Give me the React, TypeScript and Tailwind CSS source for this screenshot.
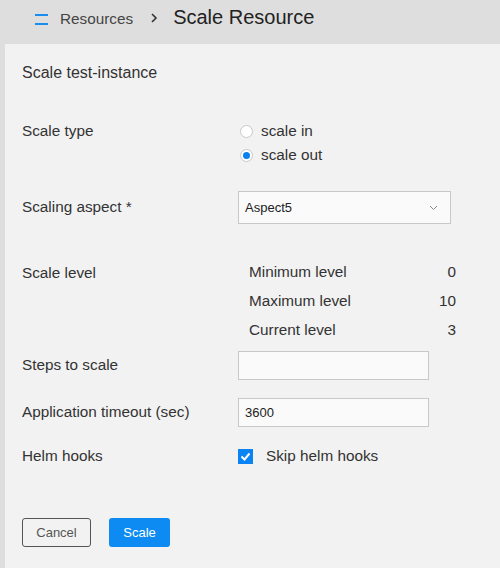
import React from 'react';

const font = { fontFamily: '"Liberation Sans", Arial, sans-serif' };

const Row: React.FC<{ label: string; className?: string; children: React.ReactNode }> = ({ label, className, children }) => (
  <div className={`flex items-center ${className ?? ''}`}>
    <div className="w-[216px] shrink-0 text-[15.3px] text-[#333]">{label}</div>
    <div className="flex-1">{children}</div>
  </div>
);

const App: React.FC = () => {
  const [scaleType, setScaleType] = React.useState<'in' | 'out'>('out');
  const [skipHooks, setSkipHooks] = React.useState(true);

  return (
    <div className="w-[500px] h-[568px] bg-[#dedede] flex flex-col overflow-hidden" style={font}>
      <header className="h-[44px] flex items-center shrink-0">
        <div className="ml-[35px] w-[13px] flex flex-col gap-[7px] mt-[-6px]">
          <span className="block h-[2px] bg-[#1a8cf0]" />
          <span className="block h-[2px] bg-[#1a8cf0]" />
        </div>
        <span className="ml-[12px] text-[15.3px] text-[#444] mt-[-5px]">Resources</span>
        <svg className="ml-[17px] mt-[-8px]" width="8" height="10" viewBox="0 0 8 10">
          <path d="M2 1l4 4-4 4" fill="none" stroke="#333" strokeWidth="1.6" />
        </svg>
        <span className="ml-[15px] text-[20px] text-[#222] mt-[-11px]">Scale Resource</span>
      </header>

      <div className="flex flex-1">
        <div className="w-[5px] shrink-0" />
        <div className="flex-1 bg-[#f2f2f2] pl-[17px] pt-[19px]">
          <div className="text-[16px] leading-[20px] text-[#333]">Scale test-instance</div>

          <div className="flex mt-[36px]">
            <div className="w-[216px] shrink-0 text-[15.3px] leading-[24px] text-[#333]">Scale type</div>
            <div className="flex flex-col">
              {(['in', 'out'] as const).map(t => (
                <label key={t} className="flex items-center h-[24px] cursor-pointer" onClick={() => setScaleType(t)}>
                  <span className="ml-[2px] w-[13px] h-[13px] rounded-full border border-[#c8c8c8] bg-white flex items-center justify-center">
                    {scaleType === t && <span className="w-[7px] h-[7px] rounded-full bg-[#0a7ff0]" />}
                  </span>
                  <span className="ml-[8px] text-[15.3px] text-[#333]">scale {t}</span>
                </label>
              ))}
            </div>
          </div>

          <Row label="Scaling aspect *" className="mt-[24px] h-[33px]">
            <div className="w-[213px] h-[33px] bg-[#fafafa] border border-[#c8c8c8] flex items-center justify-between pl-[6px] pr-[12px]">
              <span className="text-[13px] text-[#222]">Aspect5</span>
              <svg width="9" height="6" viewBox="0 0 9 6">
                <path d="M1 1l3.5 3.5L8 1" fill="none" stroke="#888" strokeWidth="1" />
              </svg>
            </div>
          </Row>

          <div className="flex mt-[34px]">
            <div className="w-[216px] shrink-0 text-[15.3px] leading-[29px] text-[#333]">Scale level</div>
            <div className="ml-[11px] w-[207px] flex flex-col text-[15.3px] text-[#333]">
              {[
                ['Minimum level', '0'],
                ['Maximum level', '10'],
                ['Current level', '3'],
              ].map(([k, v]) => (
                <div key={k} className="flex justify-between h-[29px] items-center">
                  <span>{k}</span>
                  <span>{v}</span>
                </div>
              ))}
            </div>
          </div>

          <Row label="Steps to scale" className="mt-[6px] h-[29px]">
            <input className="w-[191px] h-[29px] bg-[#fafafa] border border-[#c8c8c8] px-[6px] text-[13px] text-[#222] outline-none" />
          </Row>

          <Row label="Application timeout (sec)" className="mt-[18px] h-[29px]">
            <input
              defaultValue="3600"
              className="w-[191px] h-[29px] bg-[#fafafa] border border-[#c8c8c8] px-[6px] text-[13px] text-[#222] outline-none"
            />
          </Row>

          <Row label="Helm hooks" className="mt-[17px] h-[24px]">
            <label className="flex items-center cursor-pointer" onClick={() => setSkipHooks(s => !s)}>
              <span className="w-[15px] h-[15px] bg-[#0a84f5] flex items-center justify-center">
                {skipHooks && (
                  <svg width="11" height="9" viewBox="0 0 11 9">
                    <path d="M1.5 4.5l3 3 5-6" fill="none" stroke="#fff" strokeWidth="2" />
                  </svg>
                )}
              </span>
              <span className="ml-[13px] text-[15.3px] text-[#333]">Skip helm hooks</span>
            </label>
          </Row>

          <div className="flex mt-[50px] gap-[18px]">
            <button className="w-[69px] h-[29px] border border-[#555] rounded-[3px] text-[13px] text-[#555] bg-transparent">
              Cancel
            </button>
            <button className="w-[61px] h-[29px] rounded-[3px] text-[13px] text-white bg-[#0d8bf2]">Scale</button>
          </div>
        </div>
      </div>
    </div>
  );
};

export default App;
